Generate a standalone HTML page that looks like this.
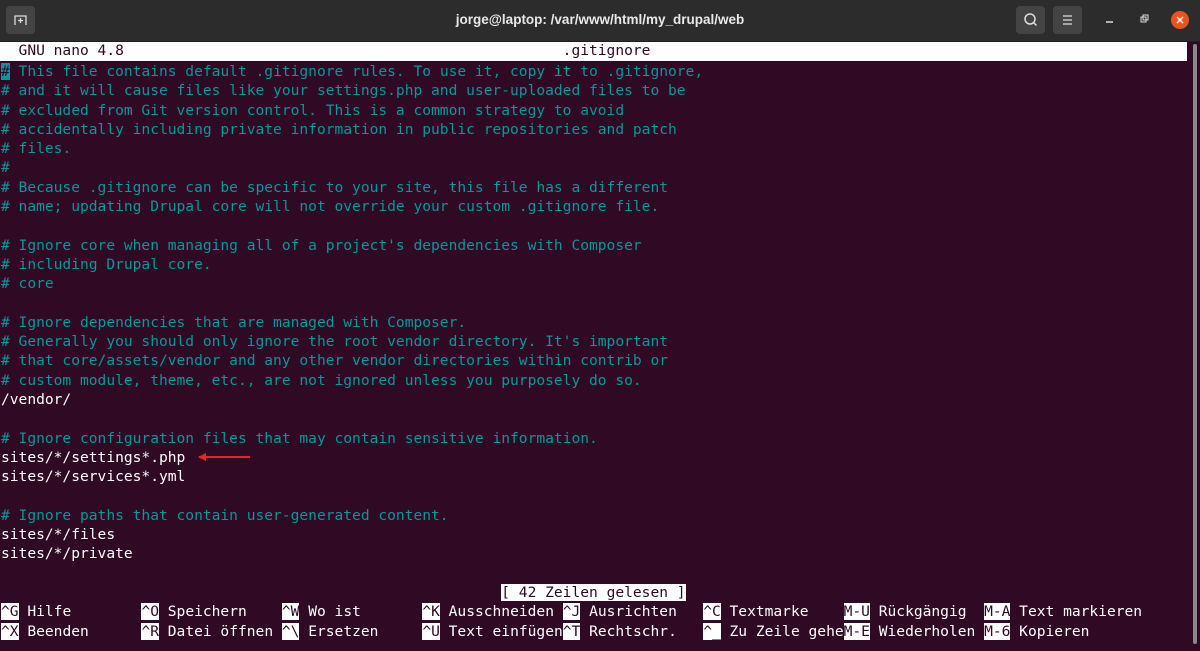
<!DOCTYPE html>
<html><head><meta charset="utf-8"><style>
body{margin:0;width:1200px;height:651px;background:#300a24;overflow:hidden;position:relative;font-family:"DejaVu Sans Mono","Liberation Mono",monospace}
.tb{position:absolute;left:0;top:0;width:1200px;height:41px;background:#2c2c2c;border-bottom:1px solid #1e1e1e}
.ttl{position:absolute;left:0;width:1200px;top:12px;text-align:center;color:#e8e8e8;font:bold 13.5px "Liberation Sans",sans-serif}
.btn{position:absolute;top:6px;width:29px;height:28px;background:#444;border-radius:4px}
pre{margin:0;position:absolute;left:1px;font-family:inherit;font-size:14.6px;letter-spacing:-0.01px;line-height:19.3px;color:#fff;white-space:pre}
.c{color:#06989a}
.hd{position:absolute;left:0;top:42px;width:1187px;height:19px;background:#fff}
.inv{background:#fff;color:#300a24}
.cur{background:#06989a;color:#300a24}
.sb{position:absolute;left:1193px;top:44px;width:4px;height:600px;background:#888;border-radius:2px}
</style></head><body>
<div class="tb">
<div class="btn" style="left:6px"><svg width="29" height="28"><path d="M9 19V10h11v9" fill="none" stroke="#ddd" stroke-width="1.3"/><path d="M14.5 12v5M12 14.5h5" stroke="#ddd" stroke-width="1.3"/></svg></div>
<div class="ttl">jorge@laptop: /var/www/html/my_drupal/web</div>
<div class="btn" style="left:1016px"><svg width="29" height="28"><circle cx="14" cy="13" r="5" fill="none" stroke="#ddd" stroke-width="1.5"/><path d="M17.5 16.5l3 3" stroke="#ddd" stroke-width="1.5"/></svg></div>
<div class="btn" style="left:1053px"><svg width="29" height="28"><path d="M10 10h9M10 14h9M10 18h9" stroke="#ddd" stroke-width="1.3"/></svg></div>
<svg style="position:absolute;left:1100px;top:8px" width="95" height="26"><path d="M6 14h7" stroke="#ddd" stroke-width="1.5"/><rect x="41" y="9" width="5" height="5" fill="none" stroke="#ddd"/><rect x="43" y="7" width="5" height="5" fill="none" stroke="#ddd"/><circle cx="80" cy="12" r="9" fill="#e95420"/><path d="M77 9l6 6M83 9l-6 6" stroke="#fff" stroke-width="1.4"/></svg>
</div>
<div class="hd"></div>
<pre style="top:41px;color:#300a24">  GNU nano 4.8                                                  .gitignore</pre>
<div class="sb"></div>
<pre style="top:62px"><span class="c"><span class="cur">#</span> This file contains default .gitignore rules. To use it, copy it to .gitignore,
# and it will cause files like your settings.php and user-uploaded files to be
# excluded from Git version control. This is a common strategy to avoid
# accidentally including private information in public repositories and patch
# files.
#
# Because .gitignore can be specific to your site, this file has a different
# name; updating Drupal core will not override your custom .gitignore file.

# Ignore core when managing all of a project's dependencies with Composer
# including Drupal core.
# core

# Ignore dependencies that are managed with Composer.
# Generally you should only ignore the root vendor directory. It's important
# that core/assets/vendor and any other vendor directories within contrib or
# custom module, theme, etc., are not ignored unless you purposely do so.</span>
/vendor/

<span class="c"># Ignore configuration files that may contain sensitive information.</span>
sites/*/settings*.php
sites/*/services*.yml

<span class="c"># Ignore paths that contain user-generated content.</span>
sites/*/files
sites/*/private

                                                         <span class="inv">[ 42 Zeilen gelesen ]</span>
<span class="inv">^G</span> Hilfe        <span class="inv">^O</span> Speichern    <span class="inv">^W</span> Wo ist       <span class="inv">^K</span> Ausschneiden <span class="inv">^J</span> Ausrichten   <span class="inv">^C</span> Textmarke    <span class="inv">M-U</span> Rückgängig  <span class="inv">M-A</span> Text markieren
<span class="inv">^X</span> Beenden      <span class="inv">^R</span> Datei öffnen <span class="inv">^\</span> Ersetzen     <span class="inv">^U</span> Text einfügen<span class="inv">^T</span> Rechtschr.   <span class="inv">^_</span> Zu Zeile gehe<span class="inv">M-E</span> Wiederholen <span class="inv">M-6</span> Kopieren</pre>
<svg style="position:absolute;left:195px;top:450px" width="60" height="14"><path d="M4 7L55 7" stroke="#e0282a" stroke-width="2"/><path d="M3 7l8-4v8z" fill="#e0282a"/></svg>
</body></html>
